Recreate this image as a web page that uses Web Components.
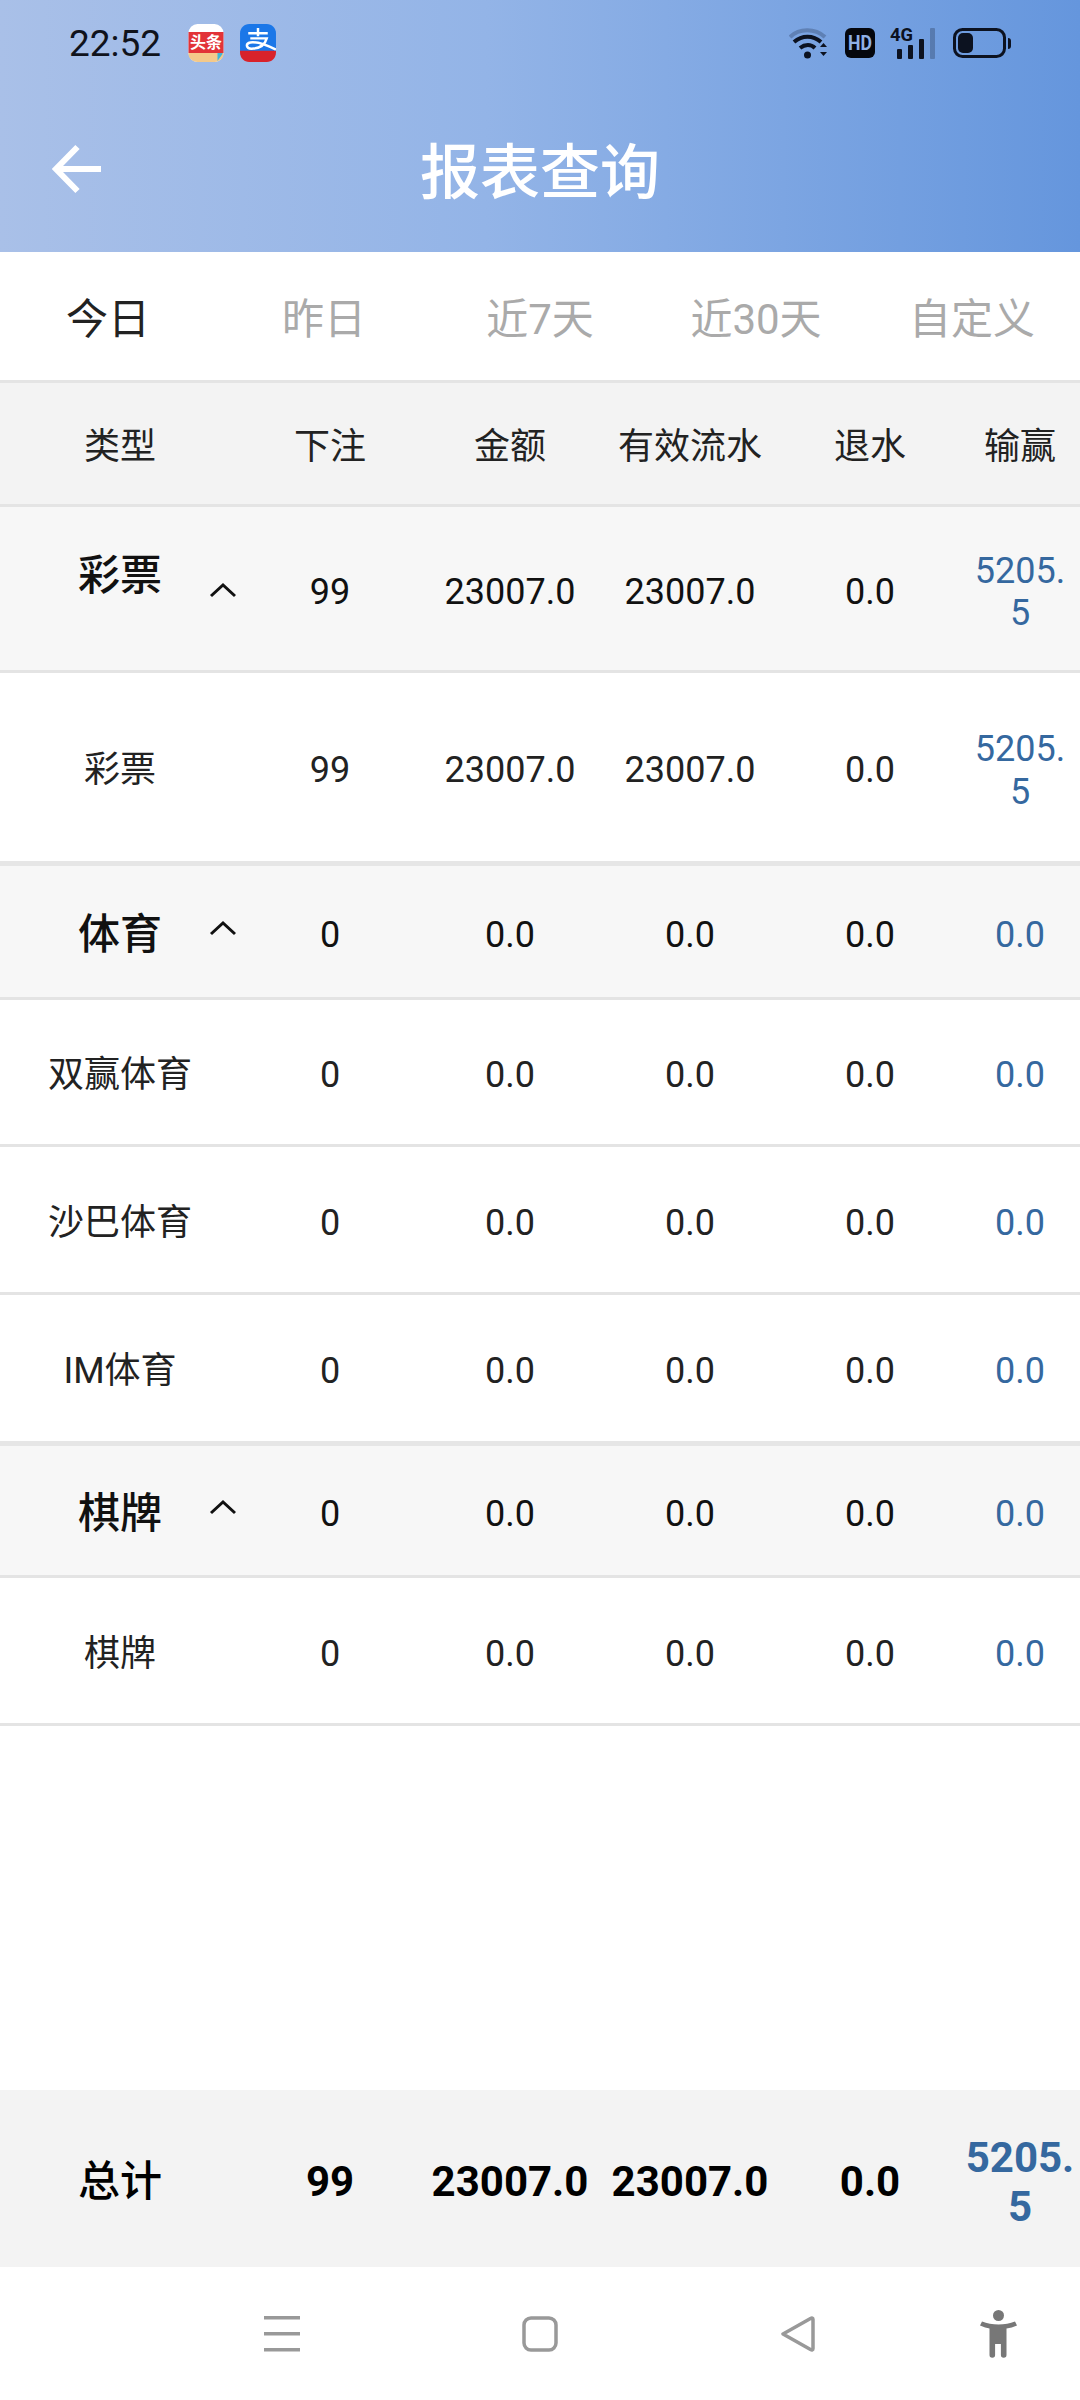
<!DOCTYPE html>
<html lang="zh-CN">
<head>
<meta charset="utf-8">
<title>报表查询</title>
<style>
  html, body { margin: 0; padding: 0; background: #fff; }
  body { font-family: Roboto, "Noto Sans CJK SC", sans-serif; }
  report-spacer { flex: 1; display: block; }
  #page { display: flex; flex-direction: column; width: 1080px; height: 2400px; overflow: hidden; }
</style>
</head>
<body>
<div id="page">
  <app-header title-text="报表查询" time="22:52"></app-header>
  <report-tabs>
    <report-tab active>今日</report-tab>
    <report-tab>昨日</report-tab>
    <report-tab>近7天</report-tab>
    <report-tab>近30天</report-tab>
    <report-tab>自定义</report-tab>
  </report-tabs>

  <report-row kind="head" style="--h:121px">
    <report-cell>类型</report-cell><report-cell>下注</report-cell><report-cell>金额</report-cell><report-cell>有效流水</report-cell><report-cell>退水</report-cell><report-cell>输赢</report-cell>
  </report-row>

  <report-row kind="group" style="--h:163px">
    <report-cell group lift>彩票</report-cell><report-cell>99</report-cell><report-cell>23007.0</report-cell><report-cell>23007.0</report-cell><report-cell>0.0</report-cell><report-cell blue>5205.5</report-cell>
  </report-row>
  <report-row kind="item" last style="--h:188px">
    <report-cell>彩票</report-cell><report-cell>99</report-cell><report-cell>23007.0</report-cell><report-cell>23007.0</report-cell><report-cell>0.0</report-cell><report-cell blue>5205.5</report-cell>
  </report-row>

  <report-row kind="group" style="--h:131px">
    <report-cell group>体育</report-cell><report-cell>0</report-cell><report-cell>0.0</report-cell><report-cell>0.0</report-cell><report-cell>0.0</report-cell><report-cell blue>0.0</report-cell>
  </report-row>
  <report-row kind="item" style="--h:144px">
    <report-cell>双赢体育</report-cell><report-cell>0</report-cell><report-cell>0.0</report-cell><report-cell>0.0</report-cell><report-cell>0.0</report-cell><report-cell blue>0.0</report-cell>
  </report-row>
  <report-row kind="item" style="--h:145px">
    <report-cell>沙巴体育</report-cell><report-cell>0</report-cell><report-cell>0.0</report-cell><report-cell>0.0</report-cell><report-cell>0.0</report-cell><report-cell blue>0.0</report-cell>
  </report-row>
  <report-row kind="item" last style="--h:146px">
    <report-cell>IM体育</report-cell><report-cell>0</report-cell><report-cell>0.0</report-cell><report-cell>0.0</report-cell><report-cell>0.0</report-cell><report-cell blue>0.0</report-cell>
  </report-row>

  <report-row kind="group" style="--h:129px">
    <report-cell group>棋牌</report-cell><report-cell>0</report-cell><report-cell>0.0</report-cell><report-cell>0.0</report-cell><report-cell>0.0</report-cell><report-cell blue>0.0</report-cell>
  </report-row>
  <report-row kind="item" style="--h:145px">
    <report-cell>棋牌</report-cell><report-cell>0</report-cell><report-cell>0.0</report-cell><report-cell>0.0</report-cell><report-cell>0.0</report-cell><report-cell blue>0.0</report-cell>
  </report-row>

  <report-spacer></report-spacer>

  <report-row kind="total" style="--h:177px">
    <report-cell soft>总计</report-cell><report-cell>99</report-cell><report-cell>23007.0</report-cell><report-cell>23007.0</report-cell><report-cell>0.0</report-cell><report-cell blue wide>5205.5</report-cell>
  </report-row>
  <nav-bar></nav-bar>
</div>

<script>
(() => {
  class AppHeader extends HTMLElement {
    constructor() {
      super();
      this.attachShadow({ mode: 'open' });
      this.shadowRoot.innerHTML = `
        <style>
          :host { display: block; height: 252px; flex: none; background: linear-gradient(to right, #a9c0e8 0%, #93b4e7 45%, #6596dd 100%); }
          .status { display: flex; align-items: center; height: 86px; padding: 0 69px 0 69px; box-sizing: border-box; }
          .time { font-size: 37px; color: #10131c; width: 119px; }
          .app { display: block; margin-right: 16px; }
          .grow { flex: 1; }
          .sys { display: flex; align-items: center; gap: 15px; }
          .bar { display: grid; grid-template-columns: 1fr auto 1fr; align-items: center; height: 166px; padding: 0 52px; }
          .title { font-size: 60px; font-weight: 500; color: #fff; margin-bottom: 3px; }
          svg { display: block; }
        </style>
        <div class="status">
          <span class="time"></span>
          <svg class="app" width="36" height="38" viewBox="0 0 35 38">
            <rect width="35" height="38" rx="9" fill="#fff"/>
            <path d="M0 8h35v21H0z" fill="#e23338"/>
            <path d="M0 29h35v1c0 4-4 8-9 8H9c-5 0-9-4-9-8z" fill="#f4c98a"/>
            <path d="M29 37l5-7v-1h-5z" fill="#3fb6d8"/>
            <text x="17.500" y="24" text-anchor="middle" font-size="16" font-weight="700" fill="#fff" font-family="Noto Sans CJK SC">头条</text>
          </svg>
          <svg class="app" width="36" height="38" viewBox="0 0 35 37">
            <path d="M9 0h17c5 0 9 4 9 9v18H0V9c0-5 4-9 9-9z" fill="#1b77e8"/>
            <path d="M0 26h35v2c0 5-4 9-9 9H9c-5 0-9-4-9-9z" fill="#d8222b"/>
            <path d="M8 9h19M17.500 4v8M10 14h16c-2 7-8 10-15 10-5 0-6-5-1-6 6-1 15 2 25 7" fill="none" stroke="#fff" stroke-width="2.400"/>
          </svg>
          <span class="grow"></span>
          <div class="sys">
            <svg width="41" height="31" viewBox="0 0 41 31" fill="none">
              <path d="M1 9C10 0 26 0 36 9" stroke="#10192e" stroke-opacity=".25" stroke-width="4"/>
              <path d="M5 14c8-7 19-7 27 0" stroke="#0c1220" stroke-width="4"/>
              <path d="M11 20c5-4 11-4 15 0" stroke="#0c1220" stroke-width="4"/>
              <circle cx="18.500" cy="27" r="3.500" fill="#0c1220"/>
              <path d="M31 19l3.500-4 3.500 4zM31 24l3.500 4 3.500-4z" fill="#0c1220"/>
            </svg>
            <svg width="30" height="30" viewBox="0 0 30 30">
              <rect width="30" height="30" rx="6" fill="#05070d"/>
              <text x="15" y="22" text-anchor="middle" font-size="20" font-weight="700" fill="#8fb0e6" font-family="Roboto" textLength="24" lengthAdjust="spacingAndGlyphs">HD</text>
            </svg>
            <svg width="45" height="35" viewBox="0 -4 45 35" style="margin-top:-4px">
              <text x="0" y="13" font-size="18" font-weight="700" fill="#0c1220" font-family="Roboto" textLength="23" lengthAdjust="spacingAndGlyphs">4G</text>
              <rect x="7" y="21" width="5" height="10" rx="1" fill="#0c1220"/>
              <rect x="18" y="17" width="5" height="14" rx="1" fill="#0c1220"/>
              <rect x="29" y="11" width="5" height="20" rx="1" fill="#0c1220"/>
              <rect x="40" y="0" width="5" height="31" rx="1" fill="#0c1220" fill-opacity=".25"/>
            </svg>
            <svg width="58" height="31" viewBox="0 0 58 31" style="margin-left:3px">
              <rect x="1.500" y="1.500" width="50" height="27" rx="8" fill="none" stroke="#0c1220" stroke-width="3"/>
              <rect x="5" y="5" width="15" height="20" rx="5" fill="#0c1220"/>
              <path d="M55 10c2 0 3 1 3 3v5c0 2-1 3-3 3z" fill="#0c1220"/>
            </svg>
          </div>
        </div>
        <div class="bar">
          <svg width="50" height="50" viewBox="0 0 50 50" fill="none" stroke="#fff" stroke-width="6">
            <path d="M49 25H6M25.500 3L4 25l21.500 22"/>
          </svg>
          <span class="title"></span>
          <span></span>
        </div>`;
    }

    connectedCallback() {
      this.shadowRoot.querySelector('.time').textContent = this.getAttribute('time');
      this.shadowRoot.querySelector('.title').textContent = this.getAttribute('title-text');
    }
  }

  class ReportTabs extends HTMLElement {
    constructor() {
      super();
      this.attachShadow({ mode: 'open' });
      this.shadowRoot.innerHTML = `
        <style>
          :host { display: grid; grid-template-columns: repeat(5, 1fr); height: 131px; flex: none; box-sizing: border-box; border-bottom: 3px solid #e4e4e4; background: #fff; }
        </style>
        <slot></slot>`;
    }
  }

  class ReportTab extends HTMLElement {
    constructor() {
      super();
      this.attachShadow({ mode: 'open' });
      this.shadowRoot.innerHTML = `
        <style>
          :host { display: flex; align-items: center; justify-content: center; font-size: 42px; color: #aaa; padding-bottom: 2px; }
          :host([active]) { color: #222; }
        </style>
        <slot></slot>`;
    }
  }

  class ReportRow extends HTMLElement {
    constructor() {
      super();
      this.attachShadow({ mode: 'open' });
      this.shadowRoot.innerHTML = `
        <style>
          :host { display: grid; grid-template-columns: 240px 180px 180px 180px 180px 120px; flex: none; height: var(--h); border-bottom: 3px solid #e4e4e4; font-size: 36px; color: #222; background: #fff; }
          :host([kind="head"]) { background: #f3f3f3; }
          :host([kind="group"]) { background: #f7f7f7; color: #111; }
          :host([last]) { border-bottom: 5px solid #e6e6e6; }
          :host([kind="total"]) { background: #f3f3f3; border-bottom: 0; font-size: 42px; font-weight: 700; color: #000; }
        </style>
        <slot></slot>`;
    }
  }

  class ReportCell extends HTMLElement {
    constructor() {
      super();
      this.attachShadow({ mode: 'open' });
      this.shadowRoot.innerHTML = `
        <style>
          :host { display: flex; position: relative; align-items: center; justify-content: center; text-align: center; box-sizing: border-box; padding: 7px 6px 0; line-height: 1.172; word-break: break-all; min-width: 0; }
          :host([blue]) { color: #35689f; }
          :host([wide]) { padding: 7px 0 0; }
          :host([soft]) { font-weight: 500; }
          :host([group]) { font-size: 42px; font-weight: 500; }
          :host([lift]) .txt { margin-bottom: 32px; }
          svg { display: none; position: absolute; left: 209px; top: 50%; margin-top: -12px; }
          :host([lift]) svg { margin-top: -7px; }
          :host([group]) svg { display: block; }
        </style>
        <span class="txt"><slot></slot></span>
        <svg width="28" height="16" viewBox="0 0 28 16" fill="none" stroke="#111" stroke-width="3"><path d="M2 14L14 3l12 11"/></svg>`;
    }
  }

  class NavBar extends HTMLElement {
    constructor() {
      super();
      this.attachShadow({ mode: 'open' });
      this.shadowRoot.innerHTML = `
        <style>
          :host { display: flex; position: relative; align-items: center; justify-content: center; gap: 222px; height: 133px; flex: none; background: #fff; }
          svg { display: block; }
          .person { position: absolute; left: 980px; top: 43px; }
        </style>
        <svg width="36" height="36" viewBox="0 0 36 36" fill="#999"><rect y="0" width="36" height="3.500"/><rect y="16" width="36" height="3.500"/><rect y="32" width="36" height="3.500"/></svg>
        <svg width="36" height="36" viewBox="0 0 36 36" fill="none" stroke="#999" stroke-width="3.500"><rect x="2" y="2" width="32" height="32" rx="7"/></svg>
        <svg width="36" height="36" viewBox="0 0 36 36" fill="none" stroke="#999" stroke-width="3.500" stroke-linejoin="round"><path d="M33 3.500c0-1.500-1-1.800-2.500-1L3 18l27.500 15.500c1.500.8 2.500.5 2.500-1z"/></svg>
        <svg class="person" width="37" height="48" viewBox="0 0 37 48" fill="#777">
          <circle cx="18.500" cy="5.500" r="5.500"/>
          <path d="M2 11.500c5 2 10.500 3 16.500 3s11.500-1 16.500-3l2 4c-3.500 1.500-7 2.500-10.500 3V45a2.800 2.800 0 0 1-5.600 0V34h-5.800v11a2.800 2.800 0 0 1-5.600 0V18.500C7 18 3.500 17 0 15.500z"/>
        </svg>`;
    }
  }

  customElements.define('app-header', AppHeader);
  customElements.define('report-tabs', ReportTabs);
  customElements.define('report-tab', ReportTab);
  customElements.define('report-row', ReportRow);
  customElements.define('report-cell', ReportCell);
  customElements.define('nav-bar', NavBar);
})();
</script>
</body>
</html>
